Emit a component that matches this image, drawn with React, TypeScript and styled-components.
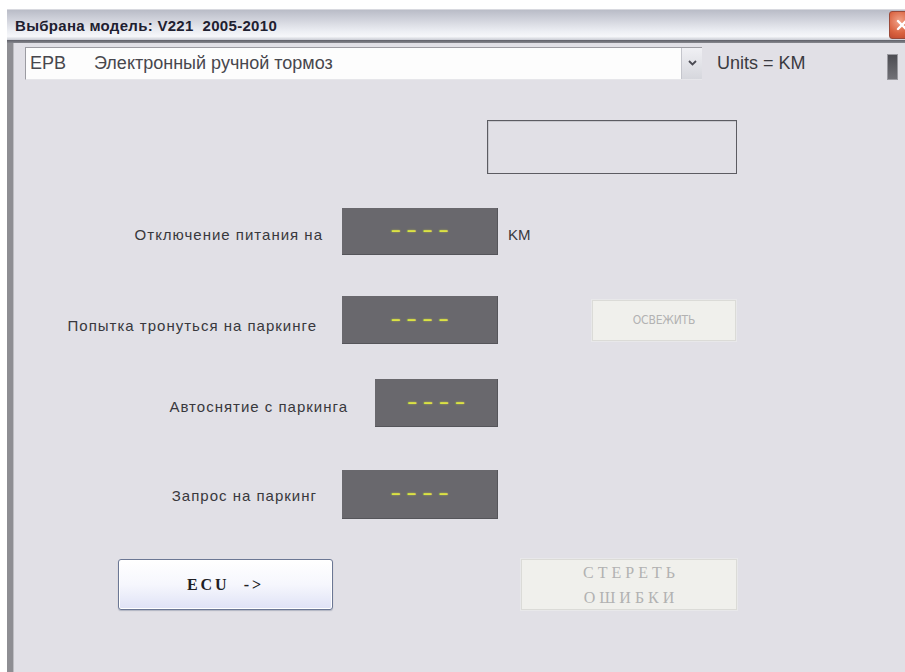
import React from "react";
import styled, { createGlobalStyle } from "styled-components";

const GlobalStyle = createGlobalStyle`
  html, body {
    margin: 0;
    padding: 0;
    background: #ffffff;
    overflow: hidden;
  }
  body {
    font-family: "Liberation Sans", Arial, sans-serif;
  }
`;

const Screen = styled.div`
  width: 905px;
  height: 672px;
  padding-top: 9px;
  padding-left: 7px;
  box-sizing: border-box;
  overflow: hidden;
`;

const Window = styled.div`
  width: 920px;
  height: 663px;
  display: flex;
  flex-direction: column;
  background: #e1e0e6;
`;

const TitleBar = styled.div`
  height: 30px;
  flex: none;
  display: flex;
  align-items: center;
  justify-content: space-between;
  padding-left: 8px;
  background: linear-gradient(
    #b9bcc7 0%,
    #cfd1da 30%,
    #eceef3 70%,
    #f6f7fa 88%,
    #c9cbd3 100%
  );
  border-top: 1px solid #d8d9df;
`;

const Title = styled.span`
  font-family: "Liberation Sans", Arial, sans-serif;
  font-weight: bold;
  font-size: 15px;
  letter-spacing: 0.3px;
  color: #1e2030;
`;

const CloseButton = styled.div`
  width: 26px;
  height: 28px;
  margin-right: 12px;
  border-radius: 3px;
  background: radial-gradient(circle at 40% 35%, #f2a48a 0%, #d9623f 55%, #b8412a 100%);
  border: 1px solid #9a4a3a;
  box-sizing: border-box;
  display: flex;
  align-items: center;
  justify-content: center;
`;

const TitleRule = styled.div`
  height: 3px;
  flex: none;
  background: linear-gradient(#5f6068, #86878e);
`;

const Body = styled.div`
  flex: 1;
  display: flex;
  flex-direction: column;
  border-left: 6px solid #8e8e93;
  box-shadow: inset 1px 0 0 #bdbdc2;
`;

const SelectorRow = styled.div`
  display: flex;
  align-items: center;
  height: 34px;
  margin-top: 3px;
  padding-left: 12px;
`;

const Combo = styled.div`
  width: 677px;
  height: 33px;
  display: flex;
  align-items: stretch;
  background: #fdfdfd;
  border-top: 1px solid #9c9ca2;
  border-left: 1px solid #9c9ca2;
  border-bottom: 1px solid #e6e6ea;
  box-sizing: border-box;
`;

const ComboText = styled.div`
  flex: 1;
  display: flex;
  align-items: center;
  gap: 28px;
  padding-left: 4px;
  font-family: "Liberation Sans", Arial, sans-serif;
  font-size: 18px;
  color: #47474d;
`;

const ComboArrow = styled.div`
  width: 20px;
  display: flex;
  align-items: center;
  justify-content: center;
  background: linear-gradient(#f0f0f4, #d6d7dd);
  border-left: 1px solid #c4c5cc;
`;

const Units = styled.span`
  margin-left: 15px;
  font-family: "Liberation Sans", Arial, sans-serif;
  font-size: 18px;
  color: #3a3a40;
`;

const Marker = styled.div`
  margin-left: auto;
  margin-right: 29px;
  width: 9px;
  height: 24px;
  margin-top: 8px;
  background: linear-gradient(#4c4c52, #707076);
  border: 1px solid #9a9aa0;
`;

const Form = styled.div`
  display: flex;
  flex-direction: column;
`;

const Row = styled.div<{ $top: number; $height: number }>`
  display: flex;
  align-items: center;
  margin-top: ${(p) => p.$top}px;
  height: ${(p) => p.$height}px;
`;

const LeftCell = styled.div<{ $gap: number }>`
  width: 485px;
  height: 100%;
  flex: none;
  display: flex;
  align-items: center;
  justify-content: flex-end;
  gap: ${(p) => p.$gap}px;
`;

const Label = styled.span<{ $dy?: number }>`
  font-family: "Liberation Sans", Arial, sans-serif;
  font-size: 15px;
  letter-spacing: 1px;
  color: #38383d;
  position: relative;
  top: ${(p) => p.$dy ?? 0}px;
`;

const Display = styled.div<{ $w: number }>`
  width: ${(p) => p.$w}px;
  height: 100%;
  background: #69686d;
  border-right: 1px solid #55555a;
  border-bottom: 1px solid #55555a;
  box-sizing: border-box;
  display: flex;
  align-items: center;
  justify-content: center;
`;

const Dashes = styled.span`
  font-family: "Liberation Sans", Arial, sans-serif;
  font-weight: bold;
  font-size: 16px;
  letter-spacing: 7px;
  margin-right: -7px;
  color: #dbe244;
  text-shadow: 0 0 2px rgba(214, 224, 60, 0.7);
`;

const Unit = styled(Label)`
  margin-left: 10px;
  letter-spacing: 0;
`;

const EmptyBox = styled.div`
  margin-left: 474px;
  width: 250px;
  height: 54px;
  border: 1px solid #5c5c62;
  box-shadow: inset 1px 1px 0 #c8c8ce;
  box-sizing: border-box;
`;

const FlatButton = styled.div<{ $ml: number; $w: number; $h: number }>`
  margin-left: ${(p) => p.$ml}px;
  width: ${(p) => p.$w}px;
  height: ${(p) => p.$h}px;
  box-sizing: border-box;
  background: #f0f0ec;
  border: 1px solid #dbdbd7;
  box-shadow: 0 0 0 1px #e8e8ea;
  display: flex;
  flex-direction: column;
  align-items: center;
  justify-content: center;
  color: #b2b2b2;
`;

const SmallCaption = styled.span`
  font-family: "DejaVu Sans Condensed", "DejaVu Sans", sans-serif;
  font-size: 12px;
  letter-spacing: -0.2px;
`;

const TypeCaption = styled.span`
  font-family: "Liberation Serif", "Times New Roman", serif;
  font-size: 16px;
  line-height: 25px;
  letter-spacing: 4px;
  margin-right: -4px;
`;

const ButtonRow = styled.div`
  display: flex;
  align-items: flex-start;
  margin-top: 40px;
  padding-left: 105px;
`;

const EcuButton = styled.button`
  width: 215px;
  height: 51px;
  padding: 0;
  border: 1px solid #6b7794;
  border-radius: 3px;
  background: linear-gradient(#ffffff 0%, #f6f7fd 50%, #dfe2f6 100%);
  box-shadow: 0 1px 1px rgba(90, 100, 130, 0.35), inset 0 0 0 1px #ffffff;
  font-family: "Liberation Serif", "Times New Roman", serif;
  font-weight: bold;
  font-size: 16px;
  letter-spacing: 3px;
  color: #202024;
  white-space: pre;
`;

const DisplayRow = ({
  top,
  height,
  gap,
  width,
  label,
  dy,
  children,
}: {
  top: number;
  height: number;
  gap: number;
  width: number;
  label: string;
  dy: number;
  children?: React.ReactNode;
}) => (
  <Row $top={top} $height={height}>
    <LeftCell $gap={gap}>
      <Label $dy={dy}>{label}</Label>
      <Display $w={width}>
        <Dashes>––––</Dashes>
      </Display>
    </LeftCell>
    {children}
  </Row>
);

export default function App() {
  return (
    <>
      <GlobalStyle />
      <Screen>
        <Window>
          <TitleBar>
            <Title>Выбрана модель: V221&nbsp;&nbsp;2005-2010</Title>
            <CloseButton>
              <svg width="12" height="12" viewBox="0 0 12 12">
                <path d="M2 2 L10 10 M10 2 L2 10" stroke="#ffffff" strokeWidth="2.4" strokeLinecap="round" />
              </svg>
            </CloseButton>
          </TitleBar>
          <TitleRule />
          <Body>
            <SelectorRow>
              <Combo>
                <ComboText>
                  <span>EPB</span>
                  <span>Электронный ручной тормоз</span>
                </ComboText>
                <ComboArrow>
                  <svg width="9" height="6" viewBox="0 0 9 6">
                    <path d="M1 1 L4.5 4.5 L8 1" fill="none" stroke="#4a4a52" strokeWidth="1.8" />
                  </svg>
                </ComboArrow>
              </Combo>
              <Units>Units = KM</Units>
              <Marker />
            </SelectorRow>

            <Form>
              <Row $top={40} $height={54}>
                <EmptyBox />
              </Row>
              <DisplayRow top={34} height={47} gap={19} width={156} label="Отключение питания на" dy={3}>
                <Unit $dy={3}>KM</Unit>
              </DisplayRow>
              <DisplayRow top={41} height={48} gap={25} width={156} label="Попытка тронуться на паркинге" dy={5}>
                <FlatButton $ml={94} $w={144} $h={41}>
                  <SmallCaption>ОСВЕЖИТЬ</SmallCaption>
                </FlatButton>
              </DisplayRow>
              <DisplayRow top={35} height={48} gap={27} width={123} label="Автоснятие с паркинга" dy={3} />
              <DisplayRow top={43} height={49} gap={25} width={156} label="Запрос на паркинг" dy={1} />
              <ButtonRow>
                <EcuButton>{"ECU  ->"}</EcuButton>
                <FlatButton $ml={188} $w={216} $h={51}>
                  <TypeCaption>СТЕРЕТЬ</TypeCaption>
                  <TypeCaption>ОШИБКИ</TypeCaption>
                </FlatButton>
              </ButtonRow>
            </Form>
          </Body>
        </Window>
      </Screen>
    </>
  );
}
